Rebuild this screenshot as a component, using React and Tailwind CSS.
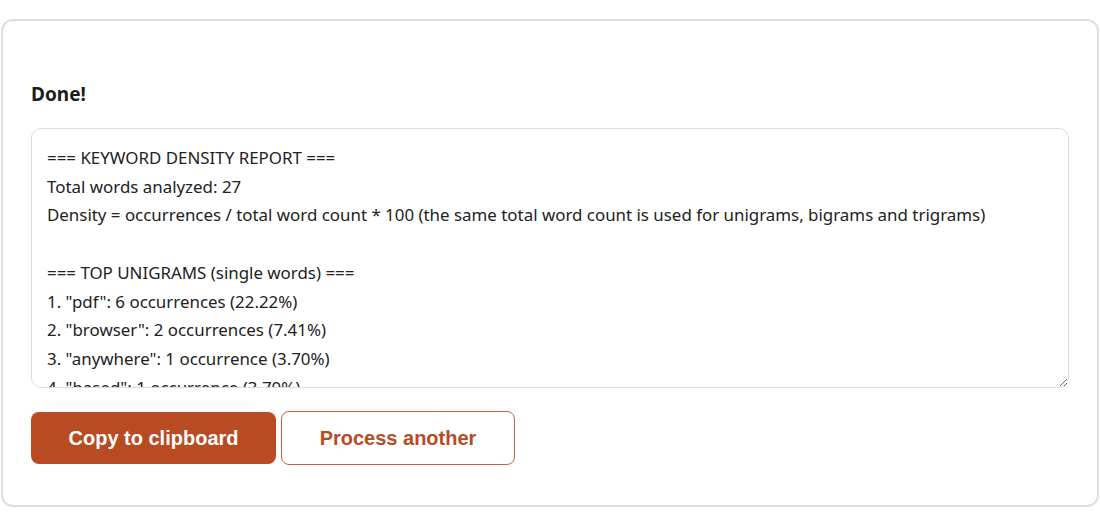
import { useState } from "react";

const report = `=== KEYWORD DENSITY REPORT ===
Total words analyzed: 27
Density = occurrences / total word count * 100 (the same total word count is used for unigrams, bigrams and trigrams)

=== TOP UNIGRAMS (single words) ===
1. "pdf": 6 occurrences (22.22%)
2. "browser": 2 occurrences (7.41%)
3. "anywhere": 1 occurrence (3.70%)
4. "based": 1 occurrence (3.70%)
5. "convert": 1 occurrence (3.70%)
6. "edit": 1 occurrence (3.70%)

=== TOP BIGRAMS (two-word phrases) ===
1. "pdf browser": 2 occurrences (7.41%)
2. "edit pdf": 1 occurrence (3.70%)`;

const App = () => {
    const [text, setText] = useState(report);

    return (
        <div className="min-h-screen bg-white px-[1px] pt-[19px] font-['Noto_Sans',sans-serif]">
            <div className="rounded-xl border-2 border-[#dedfe0] bg-white px-7 pb-[40px] pt-[61px]">
                <h2 className="text-[19px] font-bold leading-6 text-[#1c1c1c]">Done!</h2>

                <textarea
                    className="mt-[22px] block h-[260px] w-full rounded-[10px] border border-[#dcdcdc] px-[15px] pt-[15px] text-[16.9px] leading-[28.7px] text-[#222] focus:outline-none"
                    value={text}
                    onChange={(e) => setText(e.target.value)}
                />

                <div className="mt-[23px] flex items-center gap-[5px] font-['Liberation_Sans',Arial,sans-serif]">
                    <button className="h-[52px] w-[245px] rounded-lg bg-[#b94b22] text-[20px] font-bold text-white">
                        Copy to clipboard
                    </button>
                    <button className="h-[54px] w-[234px] rounded-lg border border-[#c2633f] bg-white text-[20px] font-bold text-[#b94b22]">
                        Process another
                    </button>
                </div>
            </div>
        </div>
    );
};

export default App;
